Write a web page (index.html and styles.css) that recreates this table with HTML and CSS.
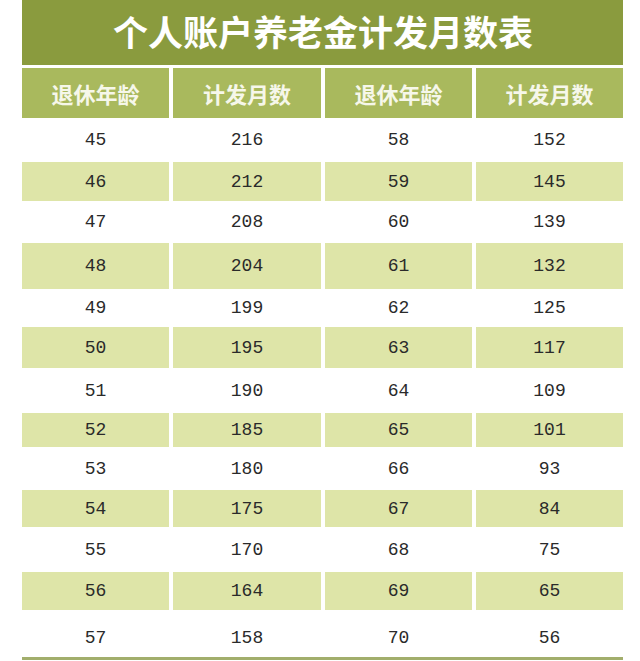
FILE: index.html
```html
<!DOCTYPE html>
<html lang="zh">
<head>
<meta charset="utf-8">
<title>个人账户养老金计发月数表</title>
<link rel="stylesheet" href="styles.css">
</head>
<body>
<div class="sheet">
  <div class="title">个人账户养老金计发月数表</div>
  <div class="row head">
    <div class="cell">退休年龄</div><div class="cell">计发月数</div><div class="cell">退休年龄</div><div class="cell">计发月数</div>
  </div>
  <div class="body">
    <div class="row"><div class="cell">45</div><div class="cell">216</div><div class="cell">58</div><div class="cell">152</div></div>
    <div class="row alt"><div class="cell">46</div><div class="cell">212</div><div class="cell">59</div><div class="cell">145</div></div>
    <div class="row"><div class="cell">47</div><div class="cell">208</div><div class="cell">60</div><div class="cell">139</div></div>
    <div class="row alt"><div class="cell">48</div><div class="cell">204</div><div class="cell">61</div><div class="cell">132</div></div>
    <div class="row"><div class="cell">49</div><div class="cell">199</div><div class="cell">62</div><div class="cell">125</div></div>
    <div class="row alt"><div class="cell">50</div><div class="cell">195</div><div class="cell">63</div><div class="cell">117</div></div>
    <div class="row"><div class="cell">51</div><div class="cell">190</div><div class="cell">64</div><div class="cell">109</div></div>
    <div class="row alt"><div class="cell">52</div><div class="cell">185</div><div class="cell">65</div><div class="cell">101</div></div>
    <div class="row"><div class="cell">53</div><div class="cell">180</div><div class="cell">66</div><div class="cell">93</div></div>
    <div class="row alt"><div class="cell">54</div><div class="cell">175</div><div class="cell">67</div><div class="cell">84</div></div>
    <div class="row"><div class="cell">55</div><div class="cell">170</div><div class="cell">68</div><div class="cell">75</div></div>
    <div class="row alt"><div class="cell">56</div><div class="cell">164</div><div class="cell">69</div><div class="cell">65</div></div>
    <div class="row"><div class="cell">57</div><div class="cell">158</div><div class="cell">70</div><div class="cell">56</div></div>
  </div>
</div>
</body>
</html>
```
FILE: styles.css
```css
html, body {
  margin: 0;
  padding: 0;
  background: #ffffff;
}
.sheet {
  margin-left: 22px;
  width: 601px;
}
.title {
  height: 65px;
  background: #8a9b3e;
  color: #ffffff;
  font-family: "Noto Sans CJK SC", "Noto Sans", sans-serif;
  font-weight: 700;
  font-size: 35px;
  line-height: 62px;
  text-align: center;
  box-sizing: border-box;
  padding-left: 1px;
}
.row {
  display: grid;
  grid-template-columns: 147px 148px 147px 147px;
  column-gap: 4px;
}
.cell {
  display: flex;
  align-items: center;
  justify-content: center;
}
.head {
  margin-top: 3px;
  height: 50px;
}
.head .cell {
  background: #a9b95d;
  color: #f6f7ea;
  font-family: "Noto Sans CJK SC", "Noto Sans", sans-serif;
  font-weight: 700;
  font-size: 22px;
}
.body {
  border-bottom: 3px solid #a2ae6c;
}
.body .cell {
  font-family: "Liberation Mono", "DejaVu Sans Mono", monospace;
  font-size: 18px;
  color: #2a2a2a;
}
.body .alt .cell {
  background: #dee5a8;
}
.body .row:nth-child(1) { height: 44px; }
.body .row:nth-child(2) { height: 39px; }
.body .row:nth-child(3) { height: 42px; }
.body .row:nth-child(4) { height: 46px; }
.body .row:nth-child(5) { height: 38px; }
.body .row:nth-child(6) { height: 41px; }
.body .row:nth-child(7) { height: 45px; }
.body .row:nth-child(8) { height: 34px; }
.body .row:nth-child(9) { height: 43px; }
.body .row:nth-child(10) { height: 37px; }
.body .row:nth-child(11) { height: 45px; }
.body .row:nth-child(12) { height: 38px; }
.body .row:nth-child(13) { height: 47px; }
.body .row:nth-child(13) .cell { padding-top: 8px; box-sizing: border-box; }
```
